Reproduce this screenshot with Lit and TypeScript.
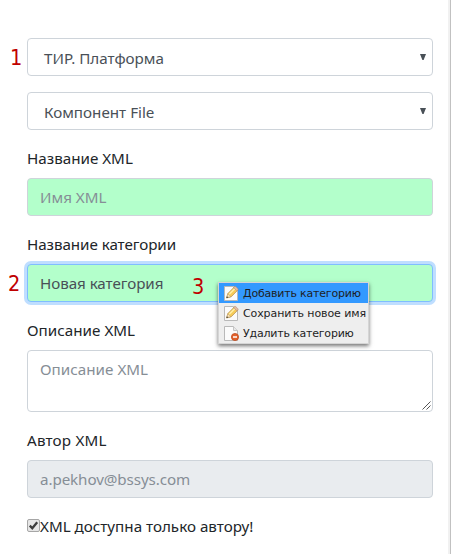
import { LitElement, html, css, svg } from "lit";
import { customElement, property } from "lit/decorators.js";

@customElement("menu-icon")
class MenuIcon extends LitElement {
  @property() kind = "edit";
  static styles = css`
    :host { display: block; width: 16px; height: 16px; flex: none; }
    svg { display: block; }
  `;
  render() {
    return html`<svg width="16" height="16" viewBox="0 0 16 16">
      <path d="M.5 1.5h9l4 4v10h-13z" fill="#fbfbfb" stroke="#b9b9b9"/>
      <path d="M9.5 1.5v4h4" fill="#e8e8e8" stroke="#c4c4c4"/>
      ${this.kind === "edit"
        ? svg`<path d="M2.6 12.9l1.3-4.4 6.8-6.9 3.4 3.2-6.9 7z" fill="#f6cb58" stroke="#b08a48" stroke-width=".7"/>
            <path d="M5.2 9.3l6-6.1" stroke="#fff0a8" stroke-width="1.5"/>
            <path d="M9.7 2.7l1.1-1.2c.6-.6 3.9 2.4 3.2 3.3l-1.1 1.1z" fill="#e3b9a4" stroke="#b08a70" stroke-width=".5"/>
            <path d="M2.6 12.9l1.3-4.1 2.9 2.8z" fill="#f7e2bd" stroke="#b08a48" stroke-width=".4"/>
            <path d="M2.4 13.1l.6-1.9 1.3 1.3z" fill="#333"/>`
        : svg`<circle cx="11" cy="12" r="3.6" fill="#e2622c" stroke="#bd4216" stroke-width=".7"/>
            <path d="M9 12h4" stroke="#fff" stroke-width="1.5"/>`}
    </svg>`;
  }
}

@customElement("app-root")
class AppRoot extends LitElement {
  static styles = css`
    :host {
      display: block; position: relative; box-sizing: border-box;
      width: 451px; height: 554px; overflow: hidden; background: #fff;
      padding: 38px 18px 0 27px;
      border-right: 1px solid #c1c1c1;
      box-shadow: inset -2px 0 #f1f1f1;
      font: 15.2px/24px "Noto Sans", "Open Sans", sans-serif; color: #212529;
    }
    * { box-sizing: border-box; }
    .form { display: flex; flex-direction: column; gap: 16px; width: 406px; }
    .group { display: flex; flex-direction: column; gap: 8px; }
    .label { height: 24px; white-space: nowrap; }
    .control {
      height: 38px; padding: 6px 12px; border: 1px solid #ced4da; border-radius: 4px;
      background: #fff; color: #495057; display: flex; justify-content: space-between;
      white-space: nowrap; position: relative;
    }
    .select { padding: 7px 6px 5px 16px; }
    .green { background: #b3ffcb; }
    .hint { color: #868e96; }
    .focus { border-color: #80bdff; box-shadow: 0 0 0 3px #bfdeff; }
    .area { height: 62px; background: #fff; }
    .off { background: #e9ecef; color: #868e96; }
    .arrow { width: 6px; height: 6px; margin-top: 8px; fill: #495057; }
    .grip { position: absolute; right: 1px; bottom: 1px; width: 9px; height: 9px; }
    .check { display: flex; height: 24px; white-space: nowrap; }
    .box { width: 13px; height: 13px; margin-top: 5px; flex: none; }
    .title { letter-spacing: .02px; }
    .author { letter-spacing: .2px; }
    .category { letter-spacing: -.06px; }
    .email { letter-spacing: -.1px; }
    .mark { position: absolute; color: #c00000; font: 21.5px/24px "DejaVu Sans Condensed", "DejaVu Sans", sans-serif; font-stretch: condensed; }
    .m1 { left: 10px; top: 46px; }
    .m2 { left: 8px; top: 272px; }
    .m3 { left: 192px; top: 275px; }
    .menu {
      position: absolute; left: 218px; top: 282px; width: 151px; height: 62px;
      border: 1px solid #d5d5d5; background: #eee; box-shadow: 0 2px 4px rgba(0,0,0,.55);
      font: 11px/20px "DejaVu Sans", sans-serif; letter-spacing: -.2px; color: #1e1e1e;
    }
    .item { display: flex; align-items: center; height: 20px; padding-left: 5px; gap: 3px; white-space: nowrap; }
    .item span { padding-top: 1px; }
    .wide { letter-spacing: -.1px; }
    .active { background: #3399ff; }
  `;
  private select(text: string) {
    return html`<div class="control select"><span>${text}</span>
      <svg class="arrow" viewBox="0 0 6 6"><path d="M0 0h6L3.6 6H2.4z"/></svg></div>`;
  }
  render() {
    return html`
      <div class="form">
        ${this.select("ТИР. Платформа")}
        ${this.select("Компонент File")}
        <div class="group"><div class="label">Название XML</div>
          <div class="control green hint">Имя XML</div></div>
        <div class="group"><div class="label category">Название категории</div>
          <div class="control green focus category">Новая категория</div></div>
        <div class="group"><div class="label title">Описание XML</div>
          <div class="control area hint title">Описание XML
            <svg class="grip" viewBox="0 0 9 9"><path d="M.5 8.5l8-8M4.5 8.5l4-4" stroke="#555" stroke-width="1"/></svg></div></div>
        <div class="group"><div class="label author">Автор XML</div>
          <div class="control off email">a.pekhov@bssys.com</div></div>
        <div class="check">
          <svg class="box" viewBox="0 0 13 13"><rect x=".5" y=".5" width="12" height="12" rx="1.5" fill="#e6e6e6" stroke="#a6a6a6"/>
            <path d="M2.8 6.6l2.5 2.6 4.9-6" fill="none" stroke="#3c3c3c" stroke-width="2.3"/></svg>
          <span>XML доступна только автору!</span></div>
      </div>
      <span class="mark m1">1</span><span class="mark m2">2</span><span class="mark m3">3</span>
      <div class="menu">
        <div class="item active"><menu-icon></menu-icon><span>Добавить категорию</span></div>
        <div class="item wide"><menu-icon></menu-icon><span>Сохранить новое имя</span></div>
        <div class="item"><menu-icon kind="delete"></menu-icon><span>Удалить категорию</span></div>
      </div>`;
  }
}
